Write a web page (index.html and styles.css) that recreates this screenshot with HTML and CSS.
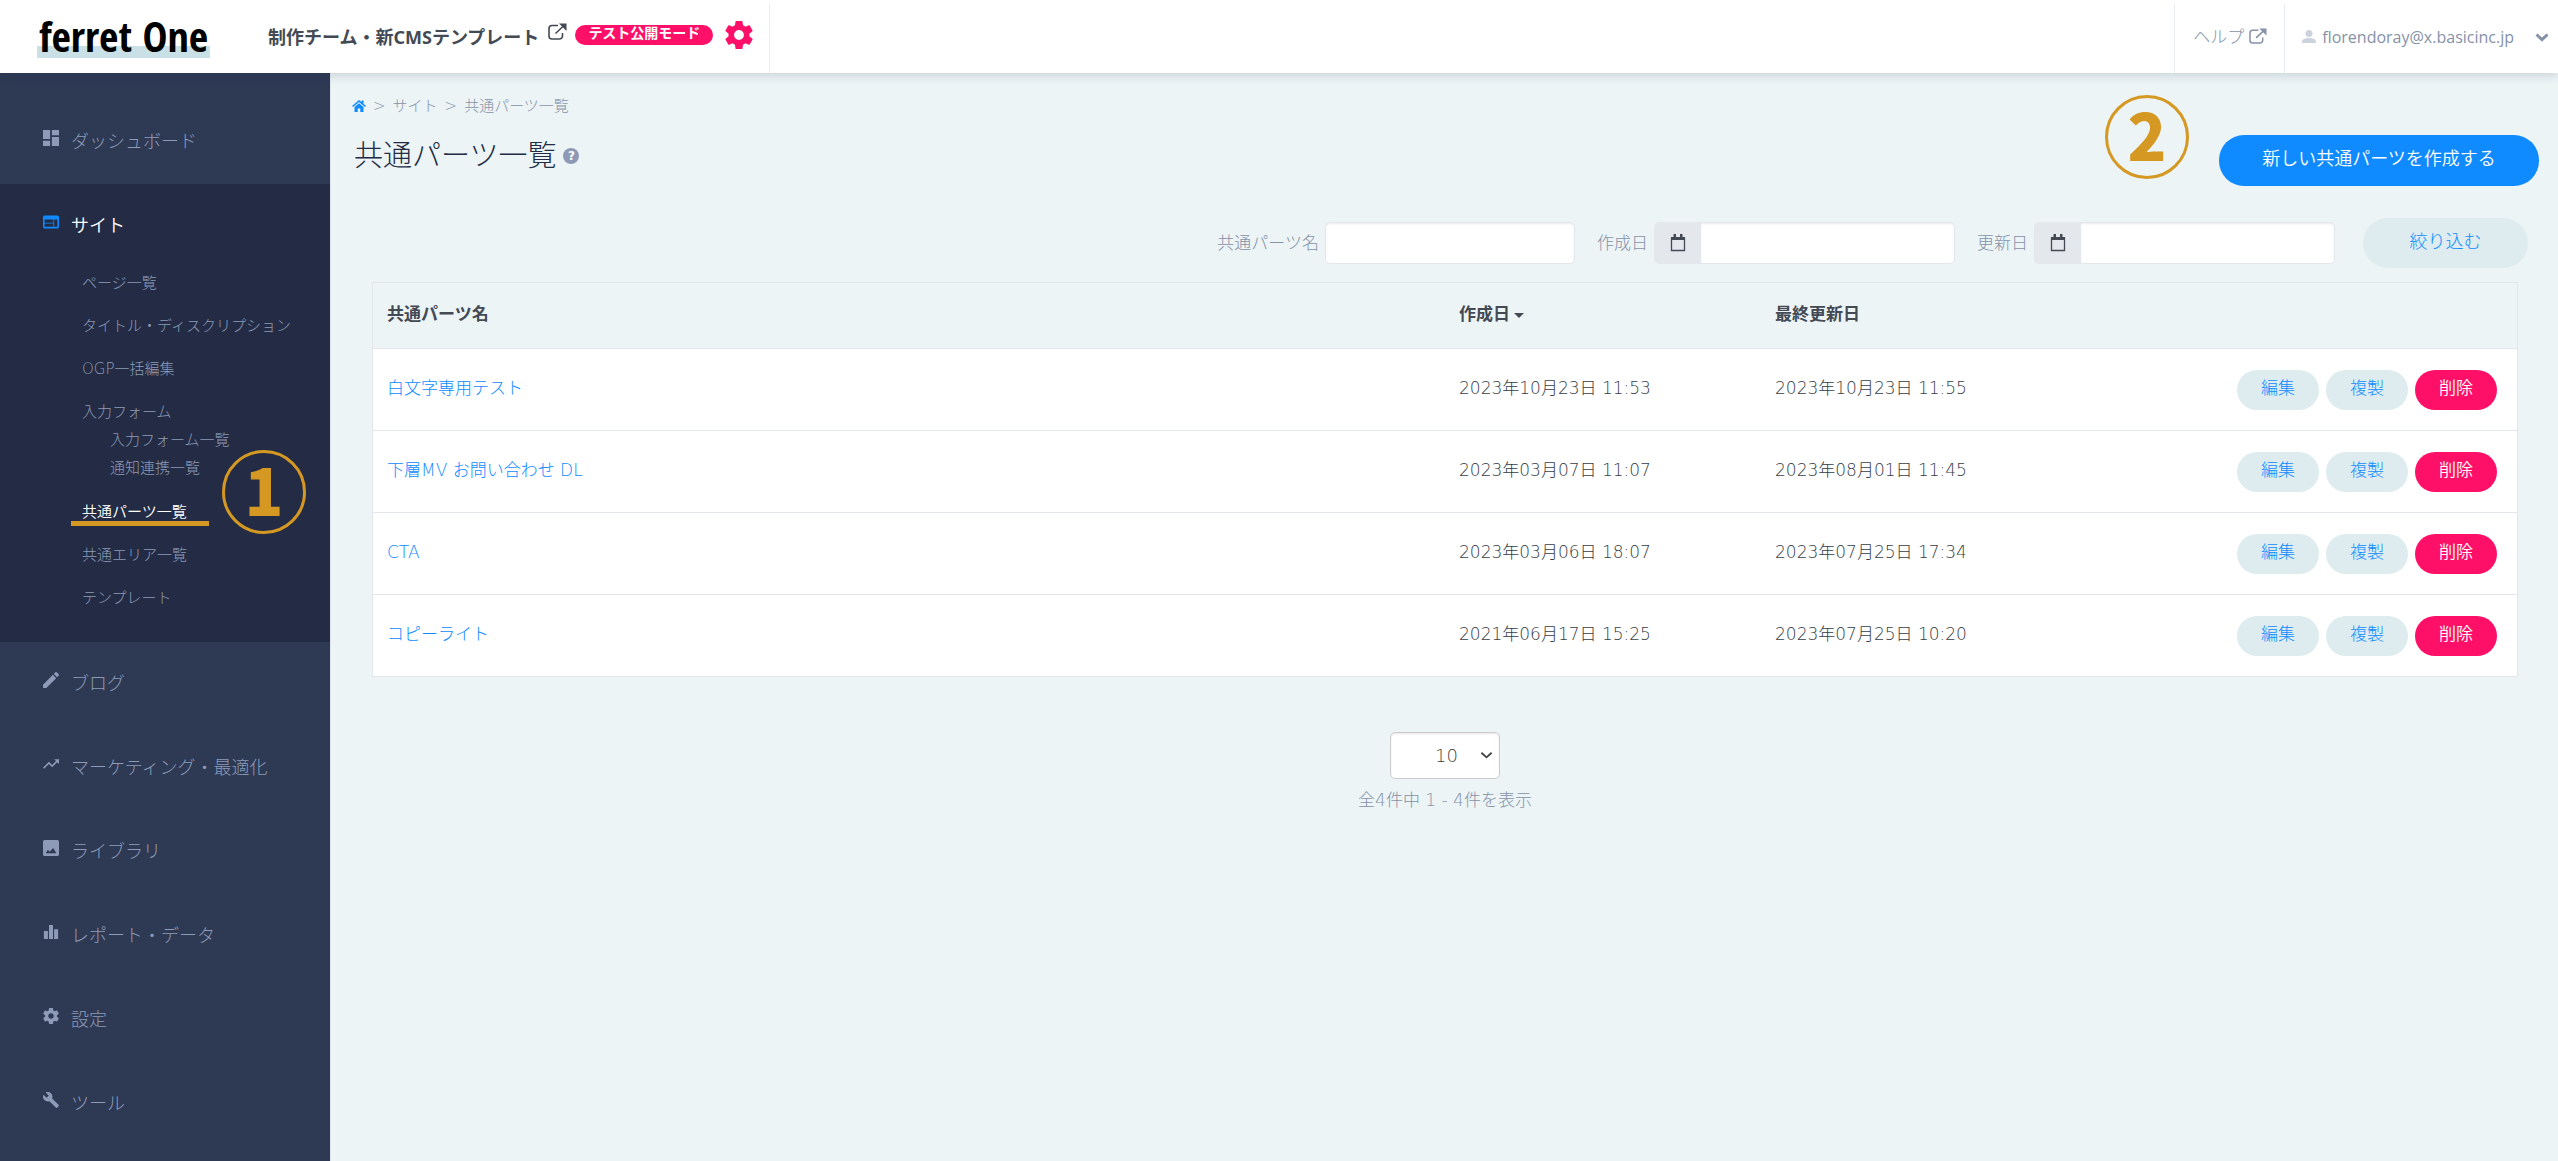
FILE: index.html
```
<!DOCTYPE html>
<html lang="ja">
<head>
<meta charset="utf-8">
<title>共通パーツ一覧</title>
<meta name="viewport" content="width=device-width, initial-scale=1">
<link rel="stylesheet" href="styles.css">
</head>
<body>
<svg class="sprite" aria-hidden="true">
  <symbol id="external" viewBox="0 0 20 18"><path d="M11 2.500H5a3 3 0 0 0-3 3V13a3 3 0 0 0 3 3h7.500a3 3 0 0 0 3-3v-3M8.500 10.500 17 2.500" fill="none" stroke="currentColor" stroke-width="1.600"/><path d="M12 .5h7.500V8z" fill="currentColor"/></symbol>
  <symbol id="gear" viewBox="2 2 20 20"><path fill="currentColor" d="M19.430 12.980c.040-.320.070-.640.070-.980s-.030-.660-.070-.980l2.110-1.650c.190-.150.240-.420.120-.640l-2-3.460c-.120-.220-.390-.300-.610-.220l-2.490 1c-.520-.400-1.080-.730-1.690-.980l-.380-2.650C14.460 2.180 14.250 2 14 2h-4c-.250 0-.460.180-.490.420l-.380 2.650c-.610.250-1.170.590-1.690.980l-2.490-1c-.230-.090-.490 0-.610.220l-2 3.460c-.130.220-.070.490.120.640l2.110 1.650c-.040.320-.070.650-.070.980s.030.660.070.980l-2.110 1.650c-.190.150-.240.420-.120.640l2 3.460c.120.220.390.300.610.220l2.490-1c.520.400 1.080.730 1.690.980l.380 2.650c.030.240.240.420.490.420h4c.250 0 .460-.180.490-.420l.380-2.650c.610-.250 1.170-.590 1.690-.980l2.490 1c.230.090.490 0 .610-.220l2-3.460c.120-.220.070-.490-.120-.640l-2.110-1.650zM12 15.500c-1.930 0-3.500-1.570-3.500-3.500s1.570-3.500 3.500-3.500 3.500 1.570 3.500 3.500-1.570 3.500-3.500 3.500z"/></symbol>
  <symbol id="calendar" viewBox="0 0 16 18"><path d="M1.500 4h13v12.500h-13z" fill="none" stroke="currentColor" stroke-width="1.300"/><path d="M1 3h14v3H1zM3.500 0h2.500v4H3.500zM10 0h2.500v4H10z" fill="currentColor"/></symbol>
  <symbol id="chevron" viewBox="0 0 14 9"><path d="M1.500 1.500 7 6.700l5.500-5.200" fill="none" stroke="currentColor" stroke-width="3"/></symbol>
</svg>

<header class="topbar">
  <a class="logo" href="#">ferret One</a>
  <div class="site">
    <a class="site-name" href="#">制作チーム・新CMSテンプレート <svg class="site-ext"><use href="#external"/></svg></a>
    <span class="mode">テスト公開モード</span>
    <button class="gear" type="button" aria-label="設定"><svg><use href="#gear"/></svg></button>
  </div>
  <a class="help" href="#">ヘルプ <svg><use href="#external"/></svg></a>
  <button class="account" type="button">
    <svg class="person" viewBox="0 0 14 13"><circle cx="7" cy="3.500" r="3.500" fill="currentColor"/><path d="M0 13v-1.500C0 9 3.500 8 7 8s7 1 7 3.500V13z" fill="currentColor"/></svg>
    <span>florendoray@x.basicinc.jp</span>
    <svg class="caret"><use href="#chevron"/></svg>
  </button>
</header>

<div class="layout">
  <nav class="sidebar">
    <ul class="menu">
      <li><a class="menu-link" href="#"><svg viewBox="3 3 18 18"><path fill="currentColor" d="M3 13h8V3H3v10zm0 8h8v-6H3v6zm10 0h8V11h-8v10zm0-18v6h8V3h-8z"/></svg>ダッシュボード</a></li>
      <li class="active">
        <a class="menu-link" href="#"><svg viewBox="2 3 20 18"><path fill="currentColor" d="M20 4H4c-1.100 0-2 .900-2 2v12c0 1.100.900 2 2 2h16c1.100 0 2-.900 2-2V6c0-1.100-.900-2-2-2zm-5 14H4v-4h11v4zm0-5H4V9h11v4zm5 5h-4V9h4v9z"/></svg>サイト</a>
        <ul class="submenu">
          <li><a href="#">ページ一覧</a></li>
          <li><a href="#">タイトル・ディスクリプション</a></li>
          <li><a href="#">OGP一括編集</a></li>
          <li class="has-children"><a href="#">入力フォーム</a>
            <ul class="nested">
              <li><a href="#">入力フォーム一覧</a></li>
              <li><a href="#">通知連携一覧</a></li>
            </ul>
          </li>
          <li class="current"><a href="#">共通パーツ一覧</a><span class="step step-side">1</span></li>
          <li><a href="#">共通エリア一覧</a></li>
          <li><a href="#">テンプレート</a></li>
        </ul>
      </li>
      <li><a class="menu-link" href="#"><svg viewBox="3 3 18 18"><path fill="currentColor" d="M3 17.250V21h3.750L17.810 9.940l-3.750-3.750L3 17.250zM20.710 7.040c.390-.390.390-1.020 0-1.410l-2.340-2.340c-.390-.390-1.020-.390-1.410 0l-1.830 1.830 3.750 3.750 1.830-1.830z"/></svg>ブログ</a></li>
      <li><a class="menu-link" href="#"><svg viewBox="2 2 20 20"><path fill="currentColor" d="m16 6 2.290 2.290-4.880 4.880-4-4L2 16.590 3.410 18l6-6 4 4 6.300-6.290L22 12V6z"/></svg>マーケティング・最適化</a></li>
      <li><a class="menu-link" href="#"><svg viewBox="3 3 18 18"><path fill="currentColor" d="M21 19V5c0-1.100-.900-2-2-2H5c-1.100 0-2 .900-2 2v14c0 1.100.900 2 2 2h14c1.100 0 2-.900 2-2zM6 18l2.500-4 2 2.200L14.500 12l3.500 6z"/></svg>ライブラリ</a></li>
      <li><a class="menu-link" href="#"><svg viewBox="3 3 18 18"><path fill="currentColor" d="M4 11h4.500v9H4zM9.750 4h4.500v16h-4.500zM15.500 9H20v11h-4.500z"/></svg>レポート・データ</a></li>
      <li><a class="menu-link" href="#"><svg><use href="#gear"/></svg>設定</a></li>
      <li><a class="menu-link" href="#"><svg viewBox="1 1 22 22"><path fill="currentColor" d="m22.700 19-9.100-9.100c.900-2.300.400-5-1.500-6.900-2-2-5-2.400-7.400-1.300L9 6 6 9 1.600 4.700C.400 7.100.900 10.100 2.900 12.100c1.900 1.900 4.600 2.400 6.900 1.500l9.100 9.100c.400.400 1 .400 1.400 0l2.300-2.300c.500-.400.500-1.100.100-1.400z"/></svg>ツール</a></li>
    </ul>
  </nav>

  <main class="main">
    <span class="step step-main">2</span>
    <nav class="crumbs" aria-label="パンくず">
      <a class="home" href="#" aria-label="ホーム"><svg viewBox="0 0 14 12"><path fill="currentColor" d="M7 0 0 6l1 1 6-5 6 5 1-1-2.500-2.200V.500h-2v1.600zM2.500 7 7 3.300 11.500 7v5H8.300V8.500H5.700V12H2.500z"/></svg></a>
      <span>&gt;</span><a href="#">サイト</a><span>&gt;</span><span>共通パーツ一覧</span>
    </nav>
    <div class="page-head">
      <h1>共通パーツ一覧</h1>
      <button class="hint" type="button" aria-label="ヘルプ">?</button>
      <button class="create" type="button">新しい共通パーツを作成する</button>
    </div>

    <form class="filter">
      <label for="name">共通パーツ名</label>
      <input id="name" class="name-box" type="text">
      <label for="created">作成日</label>
      <div class="date-box"><span class="addon"><svg><use href="#calendar"/></svg></span><input id="created" type="text"></div>
      <label for="updated">更新日</label>
      <div class="date-box"><span class="addon"><svg><use href="#calendar"/></svg></span><input id="updated" type="text"></div>
      <button class="narrow" type="button">絞り込む</button>
    </form>

    <table class="parts">
      <thead>
        <tr><th class="col-name" scope="col">共通パーツ名</th><th class="col-date" scope="col">作成日<span class="sort"></span></th><th class="col-date" scope="col">最終更新日</th><th></th></tr>
      </thead>
      <tbody>
        <tr><td><a href="#">白文字専用テスト</a></td><td>2023年10月23日 11:53</td><td>2023年10月23日 11:55</td><td><div class="actions"><button type="button">編集</button><button type="button">複製</button><button class="delete" type="button">削除</button></div></td></tr>
        <tr><td><a href="#">下層MV お問い合わせ DL</a></td><td>2023年03月07日 11:07</td><td>2023年08月01日 11:45</td><td><div class="actions"><button type="button">編集</button><button type="button">複製</button><button class="delete" type="button">削除</button></div></td></tr>
        <tr><td><a href="#">CTA</a></td><td>2023年03月06日 18:07</td><td>2023年07月25日 17:34</td><td><div class="actions"><button type="button">編集</button><button type="button">複製</button><button class="delete" type="button">削除</button></div></td></tr>
        <tr><td><a href="#">コピーライト</a></td><td>2021年06月17日 15:25</td><td>2023年07月25日 10:20</td><td><div class="actions"><button type="button">編集</button><button type="button">複製</button><button class="delete" type="button">削除</button></div></td></tr>
      </tbody>
    </table>

    <div class="pager">
      <div class="per-page">
        <select aria-label="表示件数"><option>10</option><option>20</option><option>50</option></select>
        <svg viewBox="0 0 14 9"><path d="m1.500 1.500 5.500 5 5.500-5" fill="none" stroke="currentColor" stroke-width="2"/></svg>
      </div>
      <p>全4件中 1 - 4件を表示</p>
    </div>
  </main>
</div>
</body>
</html>
```
FILE: styles.css
```
*, *::before, *::after { box-sizing: border-box; }

body {
  margin: 0;
  min-height: 100vh;
  display: flex;
  flex-direction: column;
  background: #ecf4f6;
  color: #363d47;
  font-family: "DejaVu Sans", "Noto Sans CJK JP", sans-serif;
  font-weight: 300;
  font-size: 17px;
  line-height: 24px;
}

a { color: #0f8bff; text-decoration: none; }
ul { list-style: none; margin: 0; padding: 0; }
button, input, select { font: inherit; color: inherit; }
button { border: 0; padding: 0; background: none; cursor: pointer; }
svg { display: block; flex: none; }
.sprite { position: absolute; width: 0; height: 0; }

/* Top bar */
.topbar {
  position: relative;
  z-index: 2;
  display: flex;
  height: 73px;
  background: #fff;
  box-shadow: 0 2px 10px rgba(35, 44, 68, .18);
}
.logo {
  align-self: flex-start;
  width: 173px;
  margin: 13px 58px 0 37px;
  color: #000;
  font-family: "Liberation Sans Narrow", "Open Sans Condensed", "Roboto Condensed", "Noto Sans", sans-serif;
  font-size: 42px;
  font-weight: 700;
  line-height: 45px;
  text-align: center;
  white-space: nowrap;
  background: linear-gradient(#c9e0e6, #c9e0e6) bottom / 100% 12px no-repeat;
}
.site {
  display: flex;
  align-items: center;
  gap: 8px;
  margin-top: 4px;
  padding: 0 16px 8px 0;
  border-right: 1px solid #e9ecf1;
}
.site-name {
  display: flex;
  gap: 8px;
  padding-top: 4px;
  color: #434a54;
  font-family: "Noto Sans", "Noto Sans CJK JP", sans-serif;
  font-size: 18px;
  font-weight: 700;
}
.site-ext { width: 20px; height: 18px; margin-top: -2px; }
.mode {
  height: 20px;
  padding: 0 13px;
  border-radius: 10px;
  background: #ff1068;
  color: #fff;
  font-size: 14px;
  font-weight: 700;
  line-height: 17px;
}
.gear { margin-left: 4px; color: #ff1068; }
.gear svg { width: 28px; height: 28px; }
.help, .account {
  display: flex;
  align-items: center;
  margin-top: 4px;
  padding-bottom: 4px;
  border-left: 1px solid #e9ecf1;
  color: #8592a8;
}
.help { gap: 4px; margin-left: auto; padding-left: 18px; padding-right: 17px; }
.help svg { width: 19px; height: 17px; }
.account { gap: 6px; padding-left: 17px; padding-right: 9px; font-family: "Open Sans", sans-serif; font-size: 16px; font-weight: 400; }
.person { width: 14px; height: 13px; color: #cdd3dc; }
.caret { width: 14px; height: 9px; margin: 2px 0 0 15px; }

/* Page frame */
.layout { flex: 1; display: flex; }
.sidebar { width: 330px; flex: none; padding-top: 27px; background: #2e3954; }
.main { position: relative; flex: 1; min-width: 0; padding: 21px 40px 40px 41px; border-left: 1px solid #dfe3ea; }

/* Side menu */
.menu-link {
  display: flex;
  align-items: center;
  gap: 12px;
  padding: 30px 0 30px 43px;
  color: #8d9bb8;
  font-size: 18px;
}
.menu-link svg { width: 16px; height: 16px; margin-bottom: 8px; }
.active { background: #232c44; padding-bottom: 22px; }
.active .menu-link { padding-bottom: 24px; color: #fff; font-weight: 350; }
.active .menu-link svg { color: #0f8bff; }
.submenu { font-size: 15px; line-height: 20px; }
.submenu > li { padding: 11px 0 12px 82px; }
.submenu a { display: block; color: #8d9bb8; }
.submenu > .has-children { padding-bottom: 9px; }
.nested { margin-top: 4px; padding-left: 28px; line-height: 28px; }
.submenu .current { position: relative; }
.submenu .current a { color: #fff; font-weight: 350; }
.current::after {
  content: "";
  position: absolute;
  left: 71px;
  top: 30px;
  width: 138px;
  height: 5px;
  background: #d49823;
}

/* Numbered step markers */
.step {
  position: absolute;
  display: grid;
  place-items: center;
  width: 84px;
  height: 84px;
  padding-bottom: 8px;
  border: 3px solid #d49823;
  border-radius: 50%;
  color: #d49823;
  font-family: "Noto Sans CJK JP", "Noto Sans", sans-serif;
  font-size: 64px;
  font-weight: 900;
  line-height: 70px;
}
.step-side { left: 222px; top: -41px; }
.step-main { right: 369px; top: 22px; }

/* Heading */
.crumbs { display: flex; gap: 7px; align-items: center; margin-left: -20px; font-size: 15px; color: #8592a8; }
.crumbs a { color: inherit; }
.crumbs .home { color: #0f8bff; }
.home svg { width: 14px; height: 12px; }
.page-head { display: flex; align-items: center; margin: 17px -21px 0 -18px; }
.page-head h1 { margin: 0; padding-bottom: 10px; color: #232c44; font-size: 29px; font-weight: 300; line-height: 40px; }
.hint { width: 16px; height: 16px; margin: 0 0 10px 7px; border-radius: 50%; background: #8e9ab5; color: #fff; font-size: 12px; font-weight: 700; line-height: 16px; }
.create {
  width: 320px;
  height: 51px;
  margin-left: auto;
  padding-bottom: 4px;
  border-radius: 25px;
  background: #0f8bff;
  color: #fff;
  font-size: 18px;
  font-weight: 350;
}

/* Filter */
.filter { display: flex; align-items: center; justify-content: flex-end; margin: 32px -10px 0 0; color: #8592a8; }
.filter label { margin-right: 6px; }
.filter input {
  height: 42px;
  border: 1px solid #e3e7eb;
  border-radius: 5px;
  background: #fff;
  box-shadow: inset 0 1px 2px rgba(0, 0, 0, .08);
}
.name-box { width: 250px; margin-right: 22px; }
.date-box { display: flex; width: 301px; margin-right: 22px; }
.date-box input { flex: 1; min-width: 0; border-left: 0; border-radius: 0 5px 5px 0; }
.addon { display: grid; place-items: center; width: 47px; border-radius: 5px 0 0 5px; background: #e4e8ec; color: #434a54; }
.addon svg { width: 16px; height: 18px; }
.narrow { width: 165px; height: 50px; margin-left: 6px; padding-bottom: 3px; border-radius: 25px; background: #deecf0; color: #0f8bff; font-size: 18px; }

/* Table */
.parts { width: 100%; margin-top: 14px; border: 1px solid #e3e7eb; border-collapse: collapse; table-layout: fixed; background: #fff; }
.parts tr { border-bottom: 1px solid #e3e7eb; }
.parts th, .parts td { padding: 0 14px 3px; text-align: left; }
.parts th { height: 66px; background: #edf4f6; color: #434a54; font-weight: 700; }
.parts td { height: 82px; }
.parts td:last-child { padding: 0 20px 0 0; }
.col-name { width: 50%; }
.col-date { width: 316px; }
.sort { display: inline-block; margin-left: 4px; border: 5px solid transparent; border-top-color: #434a54; border-bottom: 0; vertical-align: middle; }
.actions { display: flex; justify-content: flex-end; gap: 7px; }
.actions button { width: 82px; height: 40px; padding-bottom: 3px; border-radius: 20px; background: #deecf0; color: #0f8bff; }
.actions .delete { background: #ff1068; color: #fff; font-weight: 350; }

/* Pager */
.pager { display: flex; flex-direction: column; align-items: center; margin-top: 55px; color: #8592a8; }
.per-page { position: relative; color: #444; }
.per-page select {
  appearance: none;
  width: 110px;
  height: 47px;
  padding: 0 16px 0 44px;
  border: 1px solid #ccc;
  border-radius: 5px;
  background: #fff;
  box-shadow: inset 0 1px 2px rgba(0, 0, 0, .1);
  font-size: 18px;
}
.per-page svg { position: absolute; right: 7px; top: 19px; width: 13px; height: 9px; }
.pager p { margin: 9px 0 0; }
```
